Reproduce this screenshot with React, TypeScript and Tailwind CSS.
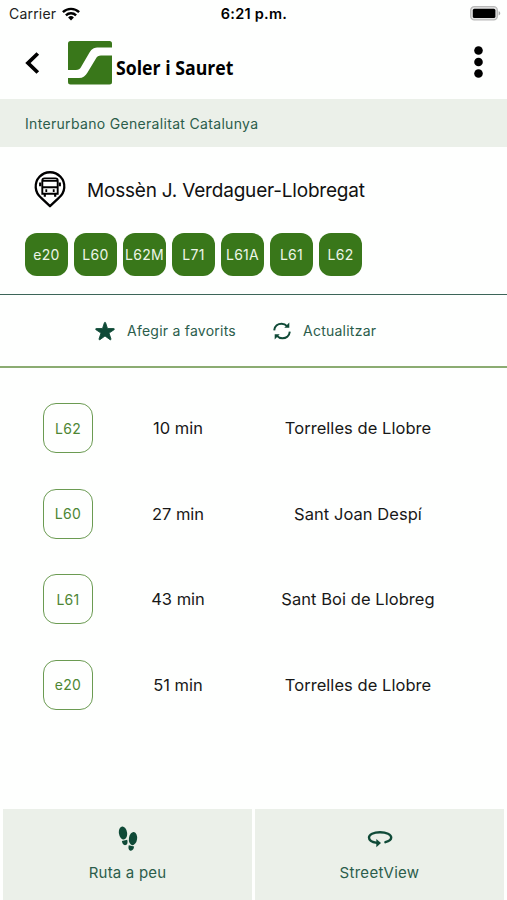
import React from "react";
import { IoStar } from "react-icons/io5";

const lines = ["e20", "L60", "L62M", "L71", "L61A", "L61", "L62"];

const arrivals = [
  { line: "L62", time: "10 min", destination: "Torrelles de Llobre" },
  { line: "L60", time: "27 min", destination: "Sant Joan Despí" },
  { line: "L61", time: "43 min", destination: "Sant Boi de Llobreg" },
  { line: "e20", time: "51 min", destination: "Torrelles de Llobre" },
];

function WifiIcon() {
  return (
    <svg width="18" height="14" viewBox="0 0 18 14" fill="none" stroke="#000" strokeWidth="2.4">
      <path d="M0.9 5.2a11.5 11.5 0 0 1 16.2 0" />
      <path d="M3.9 8.3a7.3 7.3 0 0 1 10.2 0" />
      <path d="M9 13.6L6.1 10.5a4.2 4.2 0 0 1 5.8 0z" fill="#000" stroke="none" />
    </svg>
  );
}

function BatteryIcon() {
  return (
    <svg width="31" height="15" viewBox="0 0 31 15">
      <rect x="0.7" y="0.7" width="26.6" height="13.2" rx="3.6" fill="#e4e4e4" stroke="#b9b9b9" strokeWidth="1.3" />
      <rect x="2.8" y="2.8" width="22.6" height="9.2" rx="1.6" fill="#000" />
      <path d="M28.6 5.2c2.2.6 2.2 3.6 0 4.2z" fill="#a8a8a8" />
    </svg>
  );
}

function StatusBar() {
  return (
    <div className="flex h-[27px] items-center pl-[9px] pr-[6px] text-[14px] text-[#222]">
      <div className="flex flex-1 items-center gap-[6px]">
        <span className="tracking-[0.2px]">Carrier</span>
        <WifiIcon />
      </div>
      <span className="mr-[2px] text-[14.5px] font-semibold tracking-[0.25px] text-black">6:21 p.m.</span>
      <div className="flex flex-1 justify-end">
        <BatteryIcon />
      </div>
    </div>
  );
}

function Logo() {
  return (
    <div className="flex items-center">
      <svg width="44" height="44" viewBox="0 0 44 44">
        <rect width="44" height="43.5" rx="2.5" fill="#39771a" />
        <path
          d="M0 29h8c2.5 0 4-1 5.2-3.2L21.5 11.500C23.800 7.500 26.500 6.500 30.500 6.500H44v8H33c-2.500 0-4 1-5.200 3.200L19.500 31.500C17.500 35 15 37 11 37H0z"
          fill="#fff"
        />
      </svg>
      <span className="ml-[4px] mt-[10px] w-[118px] origin-left scale-x-[0.885] whitespace-nowrap font-['Open_Sans',sans-serif] text-[20px] font-bold leading-6 text-black">
        Soler i Sauret
      </span>
    </div>
  );
}

function Header() {
  return (
    <header className="flex h-[72px] items-center pl-[25px] pr-[24px]">
      <svg width="15" height="22" viewBox="0 0 15 22" fill="none" stroke="#000" strokeWidth="3.8">
        <path d="M12.8 1.5L3 11l9.8 9.500" />
      </svg>
      <div className="ml-[28px] flex-1">
        <Logo />
      </div>
      <svg width="9" height="32" viewBox="0 0 9 32" className="mb-[2px]">
        <circle cx="4.500" cy="4.500" r="4.300" />
        <circle cx="4.500" cy="16" r="4.300" />
        <circle cx="4.500" cy="27.500" r="4.300" />
      </svg>
    </header>
  );
}

function BusStopIcon() {
  return (
    <svg width="32" height="38" viewBox="0 0 32 38" fill="none" stroke="#000">
      <path d="M7.2 26.800A14.300 14.300 0 1 1 24.800 26.800L16 35.200z" strokeWidth="2.300" strokeLinejoin="round" />
      <path d="M8.300 22.700V9.700q0-2.300 2.300-2.300h10.800q2.300 0 2.300 2.300v13z" strokeWidth="1.900" />
      <path d="M8.300 9.900h15.400M8.300 16.200h15.400" strokeWidth="1.900" />
      <path d="M6.200 11.500v3.800M25.800 11.500v3.800M10.800 23v2.700M21.200 23v2.700" strokeWidth="2.200" />
      <path d="M12.300 18.300v2.700M19.700 18.300v2.700" strokeWidth="1.800" />
    </svg>
  );
}

function RefreshIcon() {
  return (
    <svg width="18" height="18" viewBox="0 0 18 18" fill="none" stroke="#0f4a37" strokeWidth="2">
      <path d="M1.200 8.300C1.600 4 5 1.700 8.600 1.700c2.300 0 4 .8 5.400 2.400" />
      <path d="M16.800 9.700c-.4 4.300-3.800 6.600-7.400 6.600-2.300 0-4-.8-5.400-2.400" />
      <path d="M16.300 .5v5.200h-5zM1.700 17.500v-5.200h5z" fill="#0f4a37" stroke="none" />
    </svg>
  );
}

function FootprintsIcon() {
  return (
    <svg width="20" height="26" viewBox="0 0 20 26" fill="#0f4a37">
      <ellipse cx="5" cy="7" rx="4.100" ry="6.600" transform="rotate(-8 5 7)" />
      <path d="M3.900 15l5.300-1.300c.8 2.500.3 4.900-1.500 5.400-2.100.5-3.400-1.500-3.800-4.100z" />
      <ellipse cx="15" cy="12.600" rx="4.100" ry="6.600" transform="rotate(8 15 12.600)" />
      <path d="M10.800 19.300l5.300 1.300c-.4 2.600-1.700 4.600-3.800 4.100-1.800-.5-2.300-2.900-1.500-5.400z" />
    </svg>
  );
}

function RotateIcon() {
  return (
    <svg width="26" height="18" viewBox="0 0 26 18" fill="none" stroke="#0f4a37" strokeWidth="2.400">
      <path d="M10 12.900C4.500 12.100 2 10 2 7.500 2 4.500 6.500 2.200 13 2.200s11.200 2.300 11.200 5.300c0 2-1.800 3.700-5.800 4.700" strokeLinecap="round" />
      <path d="M9.300 9l4.700 4.100-4.700 4.100z" fill="#0f4a37" stroke="none" />
    </svg>
  );
}

export default function App() {
  return (
    <main className="flex h-[900px] w-[507px] flex-col overflow-hidden bg-[#fefffe] font-['Inter','Liberation_Sans',sans-serif]">
      <StatusBar />
      <Header />
      <div className="flex h-12 items-center bg-[#ebf0e9] pl-[25px] text-[14px] tracking-[0.32px] text-[#2b5d4b]">
        Interurbano Generalitat Catalunya
      </div>

      <section className="h-[148px] border-b border-[#3c6558] pt-[23px]">
        <div className="flex h-[39px] items-center pl-[34px]">
          <BusStopIcon />
          <h1 className="ml-[21px] mt-[3px] text-[19px] tracking-[-0.2px] text-[#111]">Mossèn J. Verdaguer-Llobregat</h1>
        </div>
        <div className="mt-[24px] flex gap-[6px] pl-[25px]">
          {lines.map((line) => (
            <span
              key={line}
              className="flex size-[43px] items-center justify-center rounded-[12px] bg-[#39771a] text-[14px] tracking-[0.3px] text-[#edf5e8]"
            >
              {line}
            </span>
          ))}
        </div>
      </section>

      <section className="flex h-[73px] items-center border-b-2 border-[#8bac72] pl-[95px] text-[14px] tracking-[0.24px] text-[#2b5d4b]">
        <IoStar className="size-[20px] text-[#0f4a37]" stroke="currentColor" strokeWidth="22" strokeLinejoin="round" />
        <span className="ml-[12px] w-[109px] whitespace-nowrap">Afegir a favorits</span>
        <span className="ml-[37px]">
          <RefreshIcon />
        </span>
        <span className="ml-[12px]">Actualitzar</span>
      </section>

      <section className="flex-1 pt-[18px]">
        {arrivals.map((arrival) => (
          <div key={arrival.line} className="flex h-[85.5px] items-center pl-[43px] text-[16.5px] text-[#181818]">
            <span className="mb-[1px] flex size-[50px] items-center justify-center rounded-[13px] border-[1.5px] border-[#6b9b52] text-[14px] tracking-[0.3px] text-[#4d8634]">
              {arrival.line}
            </span>
            <span className="ml-[25px] w-[120px] text-center tracking-normal">{arrival.time}</span>
            <span className="ml-[20px] w-[200px] text-center tracking-[0.05px]">{arrival.destination}</span>
          </div>
        ))}
      </section>

      <footer className="flex h-[91px] gap-[3px] px-[3px] text-[15px] tracking-[0.2px] text-[#2b5d4b]">
        <button className="flex flex-1 flex-col items-center bg-[#ebf0e9] pt-[17px]">
          <FootprintsIcon />
          <span className="mt-[10px]">Ruta a peu</span>
        </button>
        <button className="flex flex-1 flex-col items-center bg-[#ebf0e9] pt-[21px]">
          <RotateIcon />
          <span className="mt-[14px] tracking-[0.3px]">StreetView</span>
        </button>
      </footer>
    </main>
  );
}
